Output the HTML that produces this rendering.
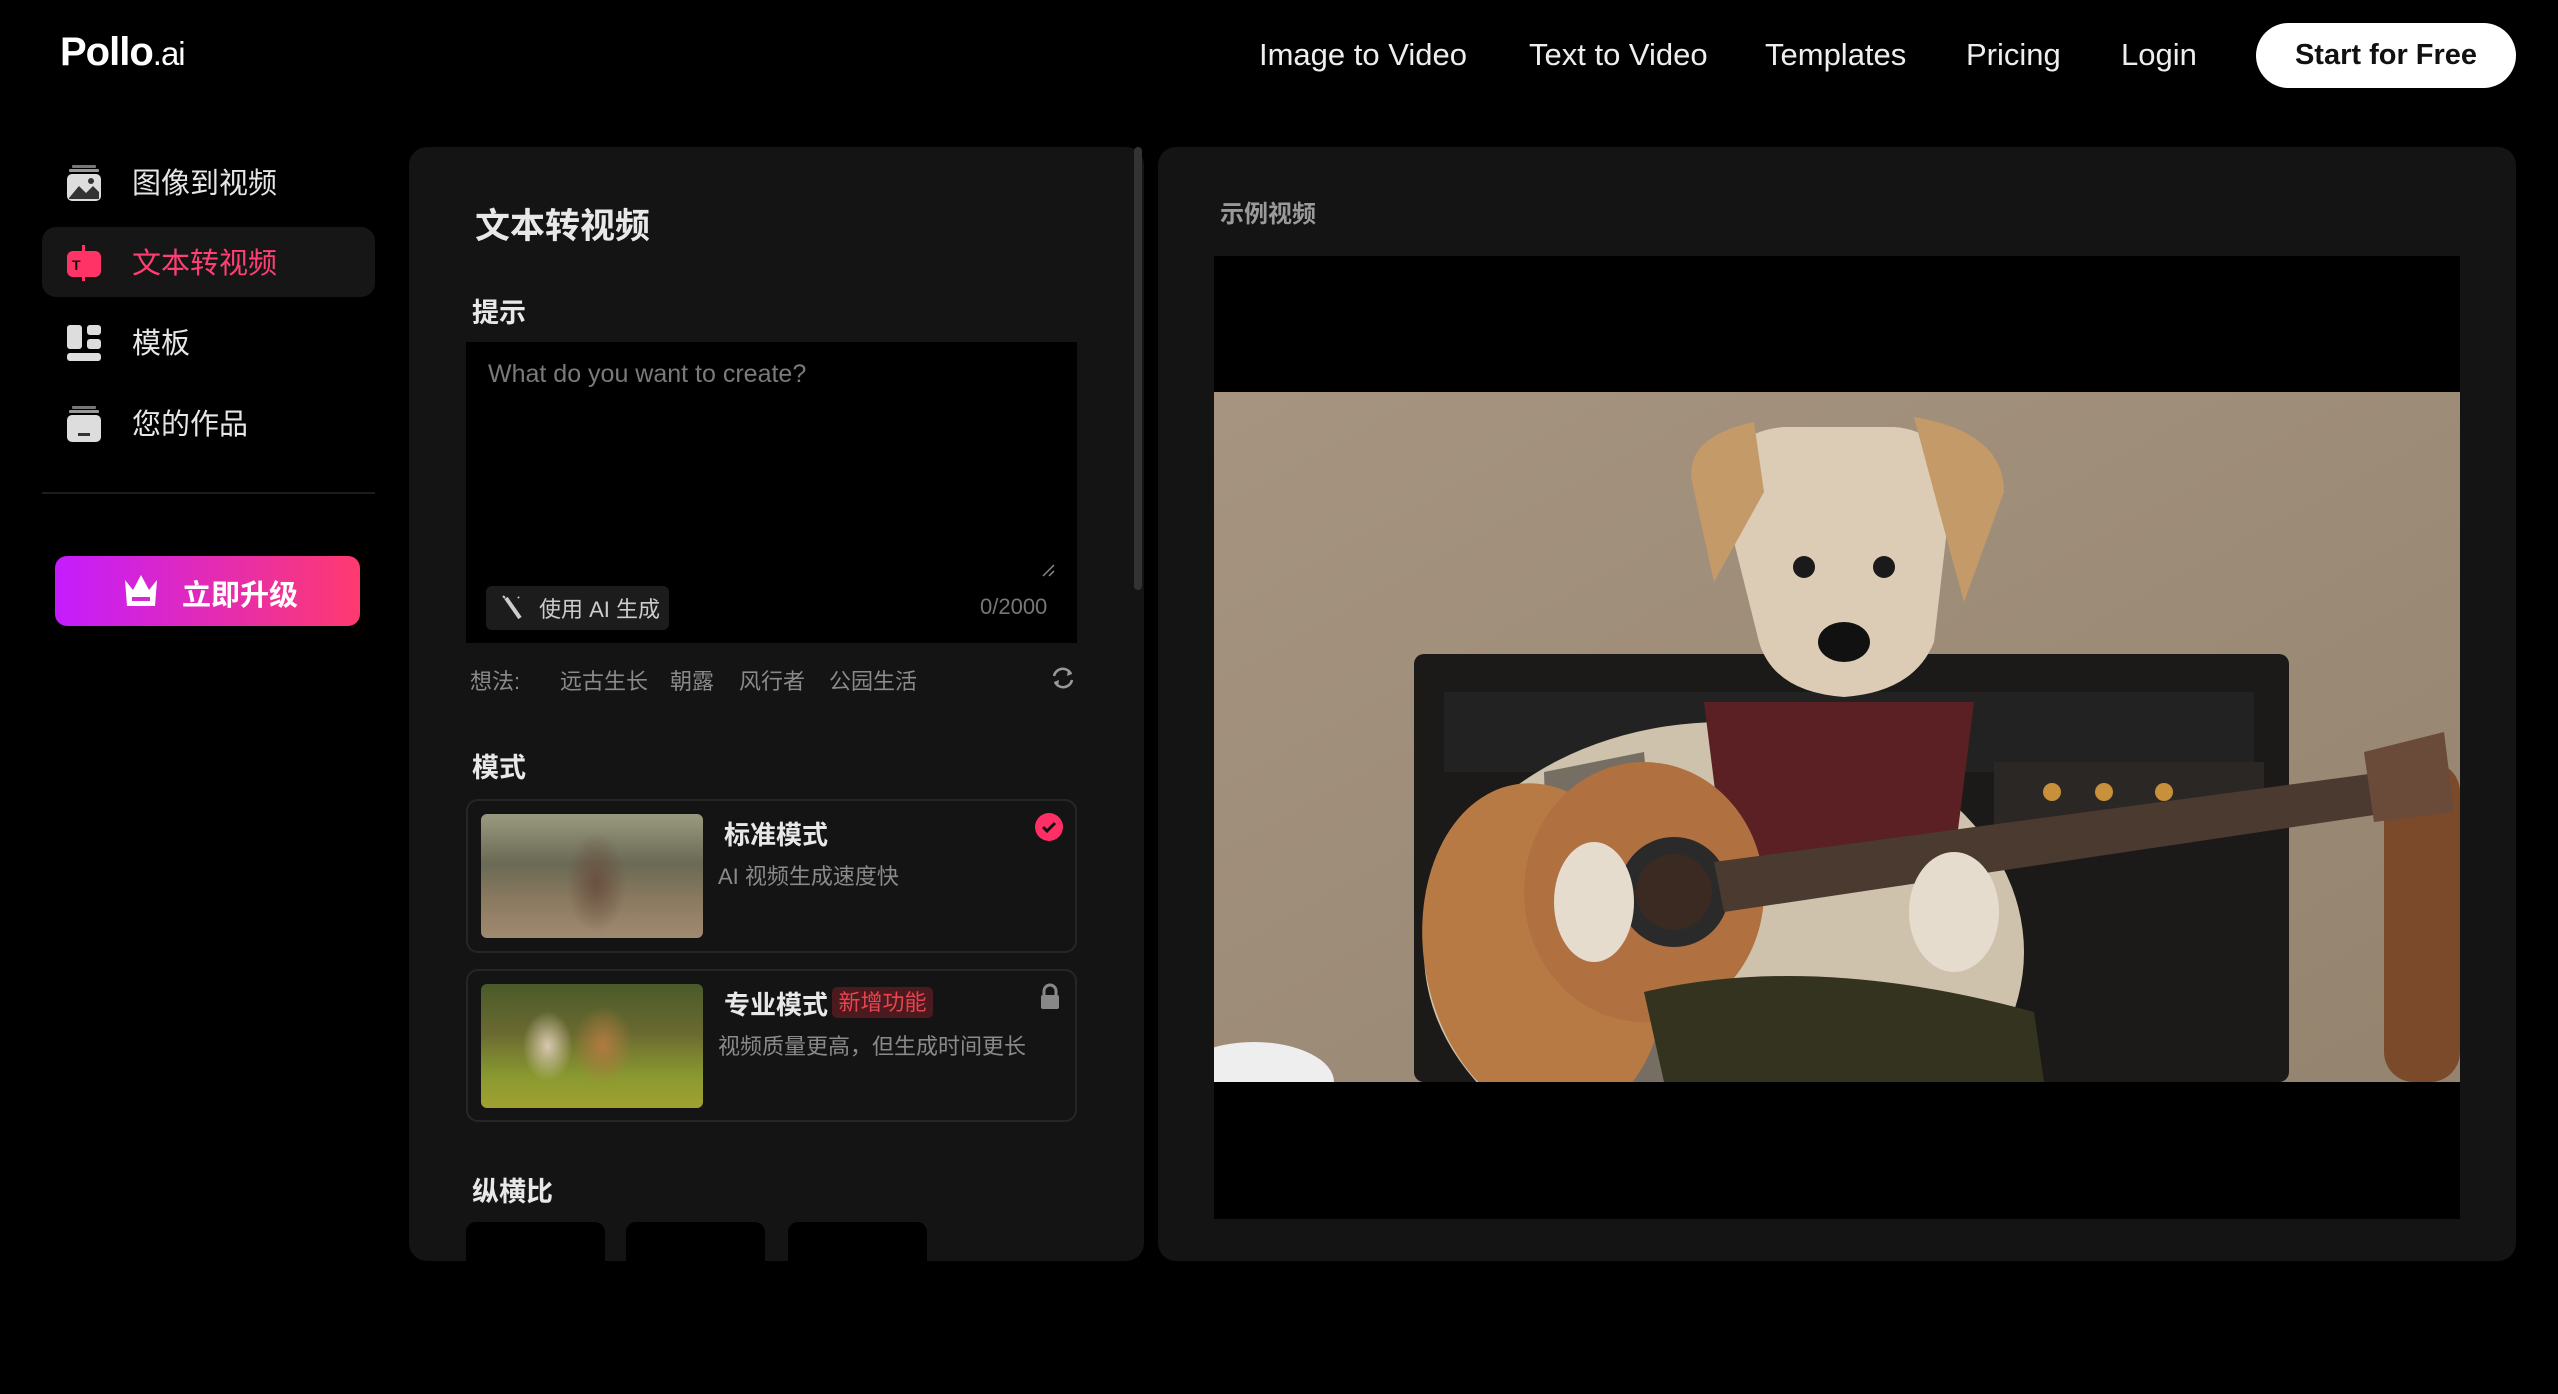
<!DOCTYPE html>
<html><head><meta charset="utf-8"><style>
*{margin:0;padding:0;box-sizing:border-box}
body{width:2558px;height:1394px;background:#000;position:relative;overflow:hidden;font-family:"Liberation Sans","Noto Sans CJK SC",sans-serif;color:#fff}
.a{position:absolute;white-space:nowrap}
.nav{font-size:31px;color:#eee;top:37px}
.side{font-size:29px;color:#e6e6e6}
.panel{background:#141414;border-radius:18px}
.h{font-weight:bold;color:#e8e8e8}
.idea{font-size:22px;color:#8a8a8a;top:664px}
</style></head><body>
<div class="a" style="left:60px;top:30px;font-size:40px;font-weight:bold;letter-spacing:-1px">Pollo<span style="font-weight:normal;font-size:33px">.ai</span></div>
<div class="a nav" style="left:1259px">Image to Video</div>
<div class="a nav" style="left:1529px">Text to Video</div>
<div class="a nav" style="left:1765px">Templates</div>
<div class="a nav" style="left:1966px">Pricing</div>
<div class="a nav" style="left:2121px">Login</div>
<div class="a" style="left:2256px;top:23px;width:260px;height:65px;background:#fff;border-radius:33px;color:#111;font-size:29px;font-weight:bold;text-align:center;line-height:65px">Start for Free</div>

<div class="a" style="left:42px;top:227px;width:333px;height:70px;background:#161616;border-radius:14px"></div>
<svg class="a" style="left:66px;top:164px" width="36" height="38" viewBox="0 0 36 38"><rect x="6" y="1" width="24" height="3" rx="1" fill="#777"/><rect x="3" y="5" width="30" height="3" rx="1" fill="#999"/><rect x="1" y="10" width="34" height="27" rx="5" fill="#ddd"/><path d="M3 34 L13 22 L20 29 L27 22 L33 28 V35 H3Z" fill="#333"/><circle cx="25" cy="17" r="3" fill="#333"/></svg>
<div class="a side" style="left:132px;top:160px">图像到视频</div>
<svg class="a" style="left:66px;top:244px" width="36" height="38" viewBox="0 0 36 38"><rect x="1" y="7" width="34" height="26" rx="6" fill="#ff3366"/><rect x="16" y="1" width="3" height="36" fill="#ff3366"/><text x="6" y="26" font-size="14" font-weight="bold" fill="#111" font-family="Liberation Sans">T</text></svg>
<div class="a side" style="left:132px;top:240px;color:#ff3f73">文本转视频</div>
<svg class="a" style="left:66px;top:324px" width="36" height="38" viewBox="0 0 36 38"><rect x="1" y="1" width="15" height="24" rx="3" fill="#ddd"/><rect x="21" y="1" width="14" height="10" rx="3" fill="#ddd"/><rect x="21" y="15" width="14" height="10" rx="3" fill="#ddd"/><rect x="1" y="29" width="34" height="8" rx="3" fill="#ddd"/></svg>
<div class="a side" style="left:132px;top:320px">模板</div>
<svg class="a" style="left:66px;top:405px" width="36" height="38" viewBox="0 0 36 38"><rect x="6" y="1" width="24" height="3" rx="1" fill="#777"/><rect x="3" y="5" width="30" height="3" rx="1" fill="#999"/><rect x="1" y="10" width="34" height="27" rx="5" fill="#ddd"/><rect x="12" y="28" width="12" height="3" fill="#333"/></svg>
<div class="a side" style="left:132px;top:401px">您的作品</div>
<div class="a" style="left:42px;top:492px;width:333px;height:2px;background:#1c1c1c"></div>
<div class="a" style="left:55px;top:556px;width:305px;height:70px;border-radius:12px;background:linear-gradient(90deg,#c41cff,#ff3a6e)"></div>
<svg class="a" style="left:121px;top:572px" width="40" height="38" viewBox="0 0 40 38"><path d="M4 8 L12 18 L20 3 L28 18 L36 8 L34 34 H6Z" fill="#fff"/><rect x="11" y="25" width="18" height="4" fill="#d02ad0"/></svg>
<div class="a" style="left:182px;top:572px;font-size:29px;font-weight:bold">立即升级</div>

<div class="a panel" style="left:409px;top:147px;width:735px;height:1114px"></div>
<div class="a" style="left:1134px;top:147px;width:8px;height:443px;background:#333;border-radius:4px"></div>
<div class="a h" style="left:475px;top:198px;font-size:35px">文本转视频</div>
<div class="a h" style="left:472px;top:291px;font-size:27px">提示</div>
<div class="a" style="left:466px;top:342px;width:611px;height:301px;background:#000"></div>
<div class="a" style="left:488px;top:360px;font-size:25px;color:#7a7a7a">What do you want to create?</div>
<svg class="a" style="left:1040px;top:562px" width="16" height="16"><path d="M3 14 L14 3 M9 14 L14 9" stroke="#888" stroke-width="1.5"/></svg>
<div class="a" style="left:486px;top:586px;width:183px;height:44px;background:#1c1c1c;border-radius:6px"></div>
<svg class="a" style="left:500px;top:594px" width="26" height="28" viewBox="0 0 26 28"><path d="M6 4 L20 24" stroke="#ccc" stroke-width="4"/><path d="M3 2 l2 2 M18 3 l1 1" stroke="#ccc" stroke-width="2"/></svg>
<div class="a" style="left:539px;top:592px;font-size:22px;color:#ccc">使用 AI 生成</div>
<div class="a" style="left:980px;top:594px;font-size:22px;color:#777">0/2000</div>
<div class="a idea" style="left:470px">想法:</div>
<div class="a idea" style="left:560px">远古生长</div>
<div class="a idea" style="left:670px">朝露</div>
<div class="a idea" style="left:739px">风行者</div>
<div class="a idea" style="left:829px">公园生活</div>
<svg class="a" style="left:1050px;top:665px" width="26" height="26" viewBox="0 0 26 26"><path d="M4 11 A9 9 0 0 1 21 9 M22 15 A9 9 0 0 1 5 17" stroke="#999" stroke-width="2.5" fill="none"/><path d="M18 5 L22 9 L17 11Z M8 21 L4 17 L9 15Z" fill="#999"/></svg>
<div class="a h" style="left:472px;top:746px;font-size:27px">模式</div>

<div class="a" style="left:466px;top:799px;width:611px;height:154px;border:2px solid #262626;border-radius:12px"></div>
<div class="a" style="left:481px;top:814px;width:222px;height:124px;border-radius:6px;background:radial-gradient(ellipse 30px 50px at 52% 55%,#6a5040,transparent),linear-gradient(180deg,#9a9a80 0%,#6a6a55 40%,#8b7a60 70%,#a08a70 100%)"></div>
<div class="a h" style="left:724px;top:815px;font-size:26px">标准模式</div>
<div class="a" style="left:718px;top:859px;font-size:22px;color:#8a8a8a">AI 视频生成速度快</div>
<svg class="a" style="left:1034px;top:812px" width="30" height="30"><circle cx="15" cy="15" r="14" fill="#ff2f66"/><path d="M9 15 L13 19 L21 11" stroke="#111" stroke-width="3" fill="none"/></svg>

<div class="a" style="left:466px;top:969px;width:611px;height:153px;border:2px solid #262626;border-radius:12px"></div>
<div class="a" style="left:481px;top:984px;width:222px;height:124px;border-radius:6px;background:radial-gradient(ellipse 25px 35px at 30% 50%,#d8c8b0,transparent),radial-gradient(ellipse 30px 40px at 55% 50%,#b07a40,transparent),linear-gradient(180deg,#4a5a2a 0%,#6a6a30 40%,#8a9a30 75%,#a0a030 100%)"></div>
<div class="a h" style="left:724px;top:985px;font-size:26px">专业模式</div>
<div class="a" style="left:832px;top:987px;width:101px;height:31px;background:#4a1a1e;border-radius:5px;color:#e8434f;font-size:22px;text-align:center;line-height:31px">新增功能</div>
<svg class="a" style="left:1039px;top:983px" width="22" height="28" viewBox="0 0 22 28"><path d="M5 12 V8 A6 6 0 0 1 17 8 V12" stroke="#888" stroke-width="3" fill="none"/><rect x="2" y="12" width="18" height="14" rx="2" fill="#888"/></svg>
<div class="a" style="left:718px;top:1029px;font-size:22px;color:#8a8a8a">视频质量更高，但生成时间更长</div>

<div class="a h" style="left:472px;top:1170px;font-size:27px">纵横比</div>
<div class="a" style="left:466px;top:1222px;width:139px;height:39px;background:#000;border-radius:10px 10px 0 0"></div>
<div class="a" style="left:626px;top:1222px;width:139px;height:39px;background:#000;border-radius:10px 10px 0 0"></div>
<div class="a" style="left:788px;top:1222px;width:139px;height:39px;background:#000;border-radius:10px 10px 0 0"></div>

<div class="a panel" style="left:1158px;top:147px;width:1358px;height:1114px"></div>
<div class="a" style="left:1220px;top:194px;font-size:24px;font-weight:bold;color:#9a9a9a">示例视频</div>
<div class="a" style="left:1214px;top:256px;width:1246px;height:963px;background:#000"></div>
<svg class="a" style="left:1214px;top:392px" width="1246" height="690" viewBox="0 0 1246 690">
<defs><linearGradient id="w" x1="0" y1="0" x2="1" y2="1"><stop offset="0" stop-color="#a69480"/><stop offset="1" stop-color="#94846f"/></linearGradient></defs>
<rect width="1246" height="690" fill="url(#w)"/>
<rect x="200" y="262" width="875" height="428" rx="10" fill="#1b1a19"/>
<rect x="230" y="300" width="810" height="80" fill="#222"/>
<rect x="780" y="370" width="270" height="65" fill="#2a2724"/>
<circle cx="838" cy="400" r="9" fill="#c8903a"/><circle cx="890" cy="400" r="9" fill="#c8903a"/><circle cx="950" cy="400" r="9" fill="#c8903a"/>
<rect x="1170" y="370" width="76" height="320" rx="30" fill="#7a4a2a"/>
<ellipse cx="510" cy="560" rx="300" ry="230" fill="#cfc2ad"/>
<path d="M330 380 L430 360 L460 690 L340 690Z" fill="#3a3632" opacity=".6"/>
<path d="M270 450 L360 440 L360 500 L270 520Z" fill="#2f2c29"/>
<path d="M490 310 L760 310 L740 470 L510 470Z" fill="#5a2024"/>
<path d="M510 110 Q505 40 570 35 L680 35 Q745 40 735 120 L720 250 Q700 300 630 305 Q560 300 545 250Z" fill="#ddccb5"/>
<path d="M540 30 Q470 45 478 90 L500 190 L550 100Z" fill="#c49a68"/>
<path d="M700 25 Q790 40 790 100 L750 210 L720 100Z" fill="#c49a68"/>
<circle cx="590" cy="175" r="11" fill="#1a1a1a"/><circle cx="670" cy="175" r="11" fill="#1a1a1a"/>
<ellipse cx="630" cy="250" rx="26" ry="20" fill="#111"/>
<ellipse cx="330" cy="560" rx="120" ry="170" fill="#b87a45" transform="rotate(-10 330 560)"/>
<ellipse cx="430" cy="500" rx="120" ry="130" fill="#b07040"/>
<circle cx="460" cy="500" r="55" fill="#2a2a2a"/><circle cx="460" cy="500" r="38" fill="#3a2a22"/>
<path d="M500 470 L1170 380 L1180 420 L510 520Z" fill="#4a3a30"/>
<path d="M1150 360 L1230 340 L1240 420 L1160 430Z" fill="#6a4a38"/>
<ellipse cx="380" cy="510" rx="40" ry="60" fill="#e5dccd"/>
<ellipse cx="740" cy="520" rx="45" ry="60" fill="#e5dccd"/>
<path d="M430 600 Q600 560 820 620 L830 690 L450 690Z" fill="#33331f"/>
<ellipse cx="40" cy="690" rx="80" ry="40" fill="#eee"/>
</svg>
</body></html>
